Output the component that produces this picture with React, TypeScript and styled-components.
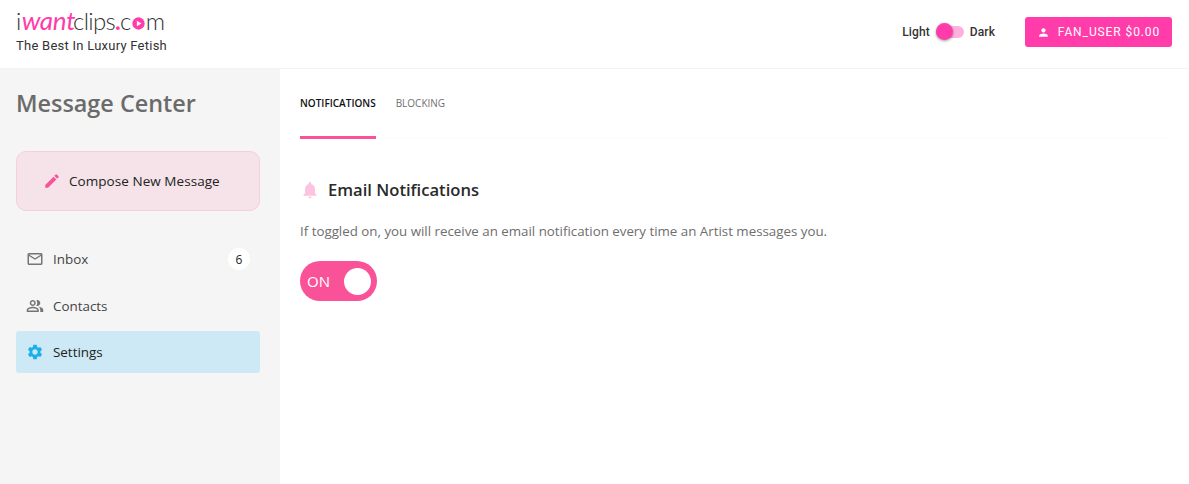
import React from "react";
import styled, {createGlobalStyle} from "styled-components";

const GlobalStyle = createGlobalStyle`
  html, body {
    margin: 0;
    padding: 0;
    background: #fff;
  }

  body {
    font-family: "Open Sans", sans-serif;
    overflow: hidden;
  }

  * {
    box-sizing: border-box;
  }
`;

const PINK = "#ff3caa";
const ROSE = "#f95298";

const navItems = [
  {label: "Inbox", icon: "mail", badge: "6"},
  {label: "Contacts", icon: "people"},
  {label: "Settings", icon: "gear", active: true},
];

const NavIcon: React.FC<{name: string}> = ({name}) => {
  if (name === "mail") {
    return (
      <svg width="18" height="18" viewBox="0 0 24 24" fill="#757575">
        <path d="M22 6c0-1.100-.9-2-2-2H4c-1.100 0-2 .9-2 2v12c0 1.100.9 2 2 2h16c1.100 0 2-.9 2-2V6zm-2 0l-8 5-8-5h16zm0 12H4V8l8 5 8-5v10z" />
      </svg>
    );
  }
  if (name === "people") {
    return (
      <svg width="18" height="18" viewBox="0 0 24 24" fill="#757575">
        <path d="M16.670 13.130C18.040 14.060 19 15.320 19 17v3h4v-3c0-2.180-3.570-3.470-6.330-3.870zM9 12c2.210 0 4-1.790 4-4s-1.790-4-4-4-4 1.790-4 4 1.790 4 4 4zm0-6c1.100 0 2 .9 2 2s-.9 2-2 2-2-.9-2-2 .9-2 2-2zM15 12c2.210 0 4-1.790 4-4s-1.790-4-4-4c-.47 0-.91.100-1.330.240C14.500 5.270 15 6.580 15 8s-.5 2.730-1.330 3.760c.42.140.86.240 1.330.240zM9 13c-2.670 0-8 1.340-8 4v3h16v-3c0-2.660-5.330-4-8-4zm6 5H3v-.99C3.200 16.290 6.300 15 9 15s5.800 1.290 6 2v1z" />
      </svg>
    );
  }
  return (
    <svg width="18" height="18" viewBox="0 0 24 24" fill="#1eaee8">
      <path d="M19.140 12.940c.04-.3.060-.61.060-.94 0-.32-.02-.64-.07-.94l2.030-1.580a.49.49 0 0 0 .12-.61l-1.920-3.320a.488.488 0 0 0-.59-.22l-2.390.96c-.5-.38-1.030-.7-1.620-.94l-.36-2.540a.484.484 0 0 0-.48-.41h-3.840c-.24 0-.43.170-.47.410l-.36 2.540c-.59.240-1.130.57-1.620.94l-2.390-.96c-.22-.08-.47 0-.59.220L2.740 8.870c-.12.210-.08.470.12.610l2.030 1.580c-.05.3-.09.630-.09.940s.02.640.07.940l-2.030 1.580a.49.49 0 0 0-.12.610l1.920 3.320c.12.220.37.290.59.220l2.390-.96c.5.380 1.030.7 1.620.94l.36 2.540c.05.240.24.410.48.410h3.840c.24 0 .44-.17.470-.41l.36-2.540c.59-.24 1.130-.56 1.620-.94l2.390.96c.22.080.47 0 .59-.22l1.920-3.320c.12-.22.070-.47-.12-.61l-2.010-1.580zM12 15.600c-1.980 0-3.600-1.620-3.600-3.600s1.620-3.600 3.600-3.600 3.600 1.620 3.600 3.600-1.620 3.600-3.600 3.600z" />
    </svg>
  );
};

const App: React.FC = () => {
  return (
    <Page>
      <GlobalStyle />
      <Header>
        <Brand>
          <Logo>
            i<LogoScript>want</LogoScript>clips<LogoDot>.</LogoDot>c
            <LogoPlay viewBox="0 0 20 20">
              <circle cx="10" cy="10" r="9.500" fill={PINK} />
              <path d="M7.500 5.800 14.500 10 7.500 14.200z" fill="#fff" />
            </LogoPlay>
            m
          </Logo>
          <Tagline>The Best In Luxury Fetish</Tagline>
        </Brand>

        <HeaderActions>
          <ThemeSwitch>
            <ThemeLabel>Light</ThemeLabel>
            <SwitchTrack>
              <SwitchThumb />
            </SwitchTrack>
            <ThemeLabel>Dark</ThemeLabel>
          </ThemeSwitch>

          <UserButton>
            <svg width="13" height="13" viewBox="0 0 24 24" fill="#fff">
              <path d="M12 12c2.210 0 4-1.790 4-4s-1.790-4-4-4-4 1.790-4 4 1.790 4 4 4zm0 2c-2.670 0-8 1.340-8 4v2h16v-2c0-2.660-5.330-4-8-4z" />
            </svg>
            FAN_USER $0.00
          </UserButton>
        </HeaderActions>
      </Header>

      <Body>
        <Sidebar>
          <SidebarTitle>Message Center</SidebarTitle>

          <ComposeButton>
            <svg width="18" height="18" viewBox="0 0 24 24" fill={ROSE}>
              <path d="M3 17.250V21h3.750L17.810 9.940l-3.750-3.750L3 17.250zM20.710 7.040a.996.996 0 0 0 0-1.410l-2.340-2.340a.996.996 0 0 0-1.410 0l-1.830 1.830 3.750 3.750 1.830-1.830z" />
            </svg>
            Compose New Message
          </ComposeButton>

          <Nav>
            {navItems.map(item => (
              <NavItem key={item.label} $active={item.active}>
                <NavIcon name={item.icon} />
                <NavLabel>{item.label}</NavLabel>
                {item.badge && <Badge>{item.badge}</Badge>}
              </NavItem>
            ))}
          </Nav>
        </Sidebar>

        <Main>
          <Tabs>
            <Tab $active>NOTIFICATIONS</Tab>
            <Tab>BLOCKING</Tab>
          </Tabs>

          <SectionTitle>
            <svg width="20" height="20" viewBox="0 0 24 24" fill="#fcc4e0">
              <path d="M12 22c1.100 0 2-.9 2-2h-4c0 1.100.9 2 2 2zm6-6v-5c0-3.070-1.630-5.640-4.500-6.320V4c0-.83-.67-1.500-1.500-1.500s-1.500.67-1.500 1.500v.68C7.640 5.360 6 7.920 6 11v5l-2 2v1h16v-1l-2-2z" />
            </svg>
            Email Notifications
          </SectionTitle>

          <Description>
            If toggled on, you will receive an email notification every time an Artist messages you.
          </Description>

          <Toggle>
            <ToggleLabel>ON</ToggleLabel>
            <ToggleKnob />
          </Toggle>
        </Main>
      </Body>
    </Page>
  );
};

export default App;

const Page = styled.div`
  display: flex;
  flex-direction: column;
  width: 1189px;
  height: 484px;
`;

const Header = styled.header`
  display: flex;
  flex: 0 0 69px;
  align-items: center;
  justify-content: space-between;
  border-bottom: 1px solid #f3f3f3;
  padding: 0 17px 0 16px;
`;

const Brand = styled.div`
  display: flex;
  flex-direction: column;
  margin-top: -5px;
`;

const Logo = styled.div`
  display: flex;
  align-items: baseline;
  height: 30px;
  margin-top: -4px;
  margin-bottom: 2px;
  color: #333;
  font-family: "Lato", sans-serif;
  font-size: 24px;
  font-weight: 300;
  letter-spacing: -0.7px;
  line-height: 30px;
`;

const LogoScript = styled.span`
  margin: 0 -2px 0 1px;
  color: ${PINK};
  font-size: 26px;
  font-style: italic;
  font-weight: 400;
  letter-spacing: -0.3px;
`;

const LogoDot = styled.span`
  color: ${PINK};
  font-weight: 700;
`;

const LogoPlay = styled.svg`
  width: 13px;
  height: 13px;
  margin: 0 1px -1px;
`;

const Tagline = styled.div`
  color: #333;
  font-family: "Roboto", sans-serif;
  font-size: 13px;
  letter-spacing: 0.25px;
  line-height: 18px;
`;

const HeaderActions = styled.div`
  display: flex;
  align-items: center;
  gap: 30px;
  margin-top: -4px;
`;

const ThemeSwitch = styled.div`
  display: flex;
  align-items: center;
  gap: 6px;
`;

const ThemeLabel = styled.span`
  color: #333;
  font-family: "Roboto", sans-serif;
  font-size: 12px;
  font-weight: 500;
  letter-spacing: 0.1px;
`;

const SwitchTrack = styled.div`
  position: relative;
  width: 28px;
  height: 12px;
  border-radius: 6px;
  background: #ffb1dd;
`;

const SwitchThumb = styled.div`
  position: absolute;
  top: -3px;
  left: 0;
  width: 17px;
  height: 17px;
  border-radius: 50%;
  background: ${PINK};
  box-shadow: 0 1px 3px rgba(0, 0, 0, 0.4);
`;

const UserButton = styled.button`
  display: flex;
  align-items: center;
  justify-content: center;
  gap: 8px;
  width: 147px;
  height: 30px;
  border: 0;
  border-radius: 3px;
  background: ${PINK};
  color: #fff;
  font-family: "Roboto", sans-serif;
  font-size: 12px;
  font-weight: 400;
  letter-spacing: 0.9px;
  padding: 0;
`;

const Body = styled.div`
  display: flex;
  flex: 1;
  min-height: 0;
`;

const Sidebar = styled.aside`
  flex: 0 0 280px;
  background: #f5f5f5;
  padding: 17px 20px 0 16px;
`;

const SidebarTitle = styled.h1`
  margin: 0 0 31px;
  color: #6b6b6b;
  font-size: 23.400px;
  font-weight: 600;
  line-height: 34px;
`;

const ComposeButton = styled.button`
  display: flex;
  align-items: center;
  gap: 8px;
  width: 100%;
  height: 60px;
  border: 1px solid #f7cfdc;
  border-radius: 10px;
  background: #f5e3e9;
  color: #222;
  font-family: inherit;
  font-size: 13.500px;
  font-weight: 500;
  letter-spacing: 0.05px;
  padding: 0 0 0 26px;
`;

const Nav = styled.nav`
  display: flex;
  flex-direction: column;
  gap: 4.500px;
  margin-top: 27px;
`;

const NavItem = styled.div<{$active?: boolean}>`
  display: flex;
  align-items: center;
  gap: 9px;
  height: 42px;
  border-radius: 3px;
  background: ${({$active}) => ($active ? "#cde9f5" : "transparent")};
  color: ${({$active}) => ($active ? "#222" : "#444")};
  font-size: 13.400px;
  font-weight: ${({$active}) => ($active ? 500 : 400)};
  padding: 0 10px;
`;

const NavLabel = styled.span`
  flex: 1;
`;

const Badge = styled.span`
  display: flex;
  align-items: center;
  justify-content: center;
  width: 22px;
  height: 22px;
  border-radius: 50%;
  background: #fff;
  color: #222;
  font-size: 12px;
  font-weight: 500;
`;

const Main = styled.main`
  flex: 1;
  padding: 0 20px;
`;

const Tabs = styled.div`
  display: flex;
  gap: 20px;
  height: 70px;
  border-bottom: 1px solid #fbfbfb;
`;

const Tab = styled.div<{$active?: boolean}>`
  height: 70px;
  border-bottom: 3px solid ${({$active}) => ($active ? ROSE : "transparent")};
  color: ${({$active}) => ($active ? "#111" : "#6f6f6f")};
  font-size: 10px;
  font-weight: ${({$active}) => ($active ? 600 : 500)};
  line-height: 69px;
`;

const SectionTitle = styled.h2`
  display: flex;
  align-items: center;
  gap: 8px;
  margin: 37px 0 0;
  color: #2a2a2a;
  font-size: 16.600px;
  font-weight: 600;
  line-height: 28px;
`;

const Description = styled.p`
  margin: 17px 0 0;
  color: #6e6e6e;
  font-size: 13.320px;
  line-height: 20px;
`;

const Toggle = styled.div`
  display: flex;
  align-items: center;
  justify-content: space-between;
  width: 76.500px;
  height: 40px;
  margin-top: 20px;
  border-radius: 20px;
  background: ${ROSE};
  padding: 0 6px 0 7px;
`;

const ToggleLabel = styled.span`
  color: #fff;
  font-size: 15px;
  font-weight: 500;
`;

const ToggleKnob = styled.div`
  width: 27px;
  height: 27px;
  border-radius: 50%;
  background: #fff;
`;
